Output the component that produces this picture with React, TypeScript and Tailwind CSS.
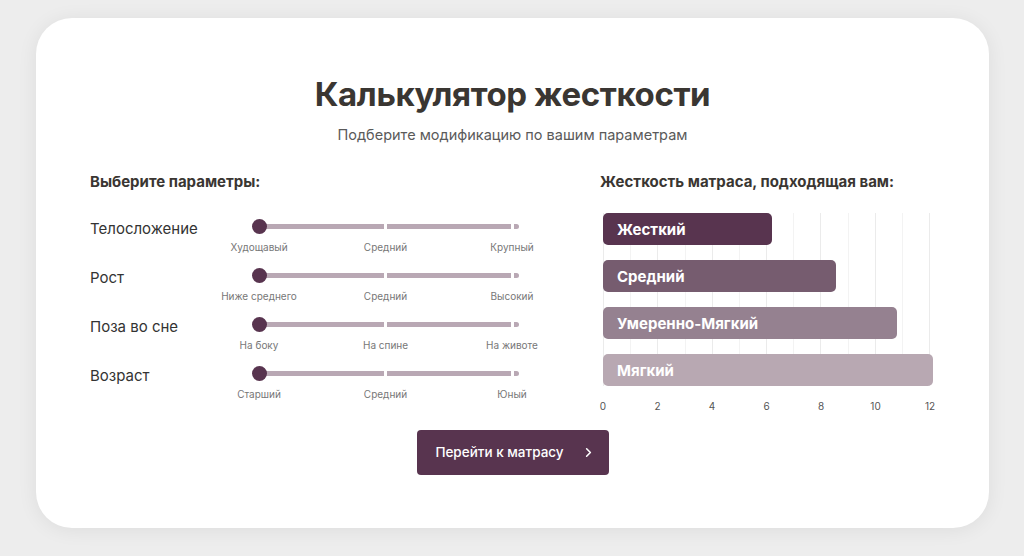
import { ChevronRight } from "lucide-react";

const params = [
    { name: "Телосложение", marks: ["Худощавый", "Средний", "Крупный"] },
    { name: "Рост", marks: ["Ниже среднего", "Средний", "Высокий"] },
    { name: "Поза во сне", marks: ["На боку", "На спине", "На животе"] },
    { name: "Возраст", marks: ["Старший", "Средний", "Юный"] },
];

const firmness = [
    { label: "Жесткий", value: 6.2, color: "bg-[#58344f]" },
    { label: "Средний", value: 8.55, color: "bg-[#765c6f]" },
    { label: "Умеренно-Мягкий", value: 10.8, color: "bg-[#958190]" },
    { label: "Мягкий", value: 12.1, color: "bg-[#b8a8b2]" },
];

const ticks = [0, 2, 4, 6, 8, 10, 12];

export default function App() {
    return (
        <main className="min-h-screen bg-[#ededed] pt-[18px] pb-[28px] pl-[36px] pr-[35px] font-['Inter',sans-serif]">
            <div className="rounded-[36px] bg-white shadow-[0_2px_20px_rgba(0,0,0,0.07)] pt-[56px] pb-[53px] px-[54px]">

                {/* header */}
                <h1 className="text-center text-[33px] leading-[40px] font-bold text-[#3a3632] tracking-[-0.4px]">
                    Калькулятор жесткости
                </h1>
                <p className="mt-[11px] text-center text-[14.5px] leading-[20px] text-[#5a5a5a]">
                    Подберите модификацию по вашим параметрам
                </p>

                <div className="mt-[27px] flex">

                    {/* params */}
                    <section className="w-[510px]">
                        <h2 className="text-[15px] leading-[20px] font-bold text-[#3a3632]">
                            Выберите параметры:
                        </h2>
                        <div className="mt-[19px] flex flex-col">
                            {params.map((p) => (
                                <div key={p.name} className="flex h-[49px]">
                                    <div className="w-[162px] mt-[6px] text-[15px] leading-[24px] text-[#333]">
                                        {p.name}
                                    </div>
                                    <div className="w-[267px]">
                                        <div className="relative mt-[8px] h-[15px] flex items-center">
                                            <div className="ml-[7px] flex w-[260px] h-[5px] gap-[3px]">
                                                <div className="w-[125px] bg-[#b9a8b4]"></div>
                                                <div className="w-[124px] bg-[#b9a8b4]"></div>
                                                <div className="flex-1 bg-[#b9a8b4] rounded-r-full"></div>
                                            </div>
                                            <span className="absolute left-0 top-0 w-[15px] h-[15px] rounded-full bg-[#58344f]"></span>
                                        </div>
                                        <div className="mt-[6px] ml-[7px] w-[253px] flex justify-between text-[10px] leading-[14px] text-[#777]">
                                            {p.marks.map((m) => (
                                                <div key={m} className="w-0 flex justify-center whitespace-nowrap">
                                                    {m}
                                                </div>
                                            ))}
                                        </div>
                                    </div>
                                </div>
                            ))}
                        </div>
                    </section>

                    {/* chart */}
                    <section className="flex-1">
                        <h2 className="text-[15px] leading-[20px] font-bold text-[#3a3632]">
                            Жесткость матраса, подходящая вам:
                        </h2>
                        <div className="mt-[21px] ml-[3px] w-[327px]">
                            <div className="relative">
                                <div className="absolute inset-0 flex">
                                    {Array.from({ length: 12 }).map((_, i) => (
                                        <div key={i} className={`flex-1 border-l ${i % 2 === 0 ? "border-[#ebebeb]" : "border-[#f3f3f3]"}`}></div>
                                    ))}
                                    <div className="w-0 border-l border-[#ebebeb]"></div>
                                </div>
                                <div className="relative flex flex-col gap-[15px]">
                                    {firmness.map((f) => (
                                        <div
                                            key={f.label}
                                            className={`${f.color} h-[32px] rounded-[5px] pl-[14px] pt-[1px] text-[15px] leading-[31px] font-bold text-white whitespace-nowrap`}
                                            style={{ width: `${(f.value / 12) * 100}%` }}
                                        >
                                            {f.label}
                                        </div>
                                    ))}
                                </div>
                            </div>
                            <div className="mt-[13px] flex justify-between text-[10px] leading-[14px] text-[#555]">
                                {ticks.map((t) => (
                                    <div key={t} className="w-0 flex justify-center">{t}</div>
                                ))}
                            </div>
                        </div>
                    </section>
                </div>

                {/* cta */}
                <div className="mt-[17px] flex justify-center">
                    <button className="flex items-center justify-center gap-[17px] w-[192px] h-[45px] pl-[6px] rounded-[4px] bg-[#58344f] text-white text-[13.5px] font-medium">
                        Перейти к матрасу
                        <ChevronRight size={15} strokeWidth={2.5} />
                    </button>
                </div>
            </div>
        </main>
    );
}
